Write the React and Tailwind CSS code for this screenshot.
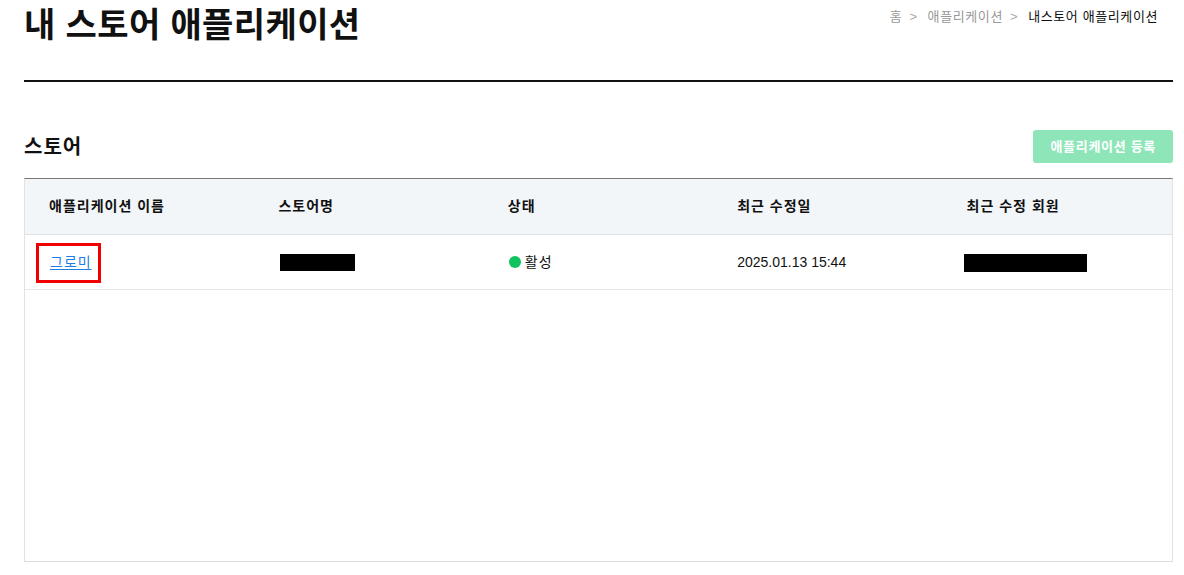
import React from 'react';

const columns = ['애플리케이션 이름', '스토어명', '상태', '최근 수정일', '최근 수정 회원'];

const Redacted = ({ className }) => <span className={`inline-block bg-black ${className}`} />;

const App = () => {
  return (
    <div className="min-h-[575px] bg-white pl-6 pr-[11px] text-[#111] [font-family:'Liberation_Sans','Noto_Sans_CJK_KR',sans-serif]">
      {/* Page header */}
      <div className="flex h-[82px] items-start justify-between border-b-2 border-[#111]">
        <h1 className="text-[34px] font-bold leading-[50px] tracking-[0.4px]">내 스토어 애플리케이션</h1>
        <nav className="flex items-center gap-[7px] pr-[15px] pt-[8px] text-[13px] leading-[18px] tracking-[0.6px]">
          <span className="text-[#999]">홈</span>
          <span className="text-[#aaa]">&gt;</span>
          <span className="ml-[3px] text-[#999]">애플리케이션</span>
          <span className="text-[#aaa]">&gt;</span>
          <span className="ml-[3px] text-[#111]">내스토어 애플리케이션</span>
        </nav>
      </div>

      {/* Section */}
      <div className="mt-[48px] flex items-center justify-between">
        <h2 className="text-[20px] font-bold leading-[28px] tracking-[1px]">스토어</h2>
        <button className="h-[33px] rounded-[3px] bg-[#8ee6b8] px-[17px] text-[13px] font-bold tracking-[0.7px] text-white">
          애플리케이션 등록
        </button>
      </div>

      {/* Table */}
      <div className="mt-[15px] h-[384px] border border-t-[#777] border-x-[#e2e2e2] border-b-[#dcdcdc]">
        <div className="grid h-[56px] grid-cols-5 items-center border-b border-[#dde1e6] bg-[#f3f6f9] text-[14px] font-bold tracking-[1px]">
          {columns.map((c) => (
            <div key={c} className="pl-[24px]">{c}</div>
          ))}
        </div>
        <div className="grid h-[55px] grid-cols-5 items-center border-b border-[#e6e6e6] text-[14px]">
          <div className="pl-[25px]">
            <span className="relative inline-block">
              <a href="#" className="tracking-[1px] text-[#1d7fe6] underline underline-offset-2">그로미</a>
              <span className="pointer-events-none absolute -bottom-[10px] -left-[14px] -right-[9px] -top-[9px] border-[3px] border-[#f00000]" />
            </span>
          </div>
          <div className="pl-[26px]">
            <Redacted className="h-[17px] w-[75px] align-middle" />
          </div>
          <div className="flex items-center gap-[4px] pl-[25px]">
            <span className="h-[12px] w-[12px] rounded-full bg-[#10c35e]" />
            <span className="tracking-[1px]">활성</span>
          </div>
          <div className="pl-[24px]">2025.01.13 15:44</div>
          <div className="pl-[21px]">
            <Redacted className="h-[18px] w-[123px] align-middle" />
          </div>
        </div>
      </div>
    </div>
  );
};

export default App;
